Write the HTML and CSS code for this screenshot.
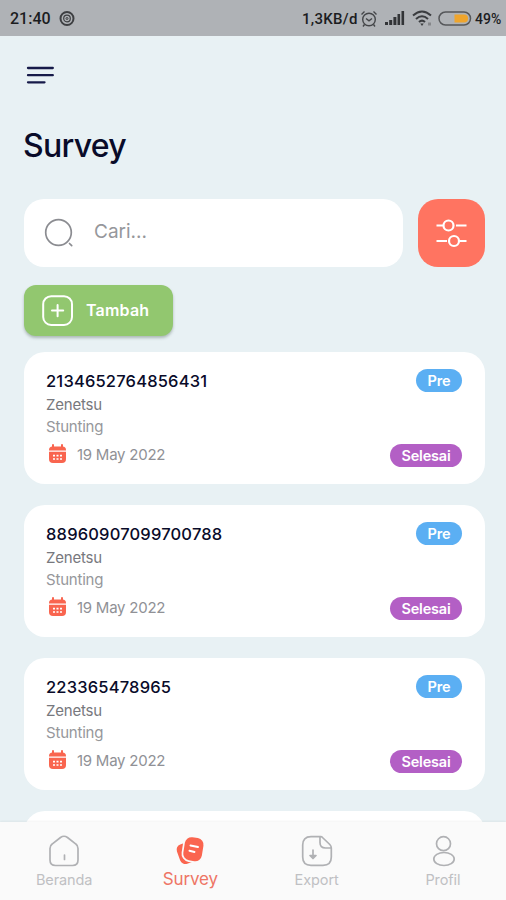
FILE: index.html
```html
<!DOCTYPE html>
<html lang="id">
<head>
<meta charset="utf-8">
<title>Survey</title>
<link rel="stylesheet" href="styles.css">
</head>
<body>
<svg class="defs" width="0" height="0">
  <symbol id="calendar" viewBox="0 0 18 20">
    <path d="M4.500 1v3M13.500 1v3" stroke="#f9654f" stroke-width="2" stroke-linecap="round"/>
    <path d="M.5 6.500V6A3.500 3.500 0 0 1 4 2.500h10A3.500 3.500 0 0 1 17.500 6v.500z" fill="#f9654f"/>
    <path d="M.5 7.700h17V15a4 4 0 0 1-4 4h-9a4 4 0 0 1-4-4z" fill="#f9654f"/>
    <path d="M4.500 11.700h2m1.500 0h2m1.500 0h2M4.500 15h2m1.500 0h2m1.500 0h2" stroke="#fff" stroke-width="1.700"/>
  </symbol>
</svg>
<header class="status">
  <span class="clock">21:40</span>
  <svg class="ring" width="16" height="16" viewBox="0 0 16 16" fill="none" stroke="#3d3f42"><circle cx="8" cy="7.500" r="6.500" stroke-width="2"/><circle cx="8" cy="7.500" r="3.300" stroke-width="1.200"/><circle cx="8" cy="7.500" r="1" stroke-width="1"/></svg>
  <span class="speed">1,3KB/d</span>
  <svg class="alarm" width="18" height="18" viewBox="0 0 18 18" fill="none" stroke="#444649" stroke-width="1.400"><circle cx="9" cy="9.500" r="6.300"/><path d="M1.500 4.500l3-3M16.500 4.500l-3-3M6 8.500l3 2.300 3-2.300M4.500 14.500L3 16.500M13.500 14.500l1.500 2"/></svg>
  <svg class="signal" width="20" height="15" viewBox="0 0 20 15" fill="#323437"><rect x="0" y="11" width="3" height="3"/><rect x="4.200" y="9" width="3" height="5"/><rect x="8.400" y="6" width="3" height="8"/><rect x="12.500" y="3" width="2.600" height="11"/><rect x="16.500" y="0" width="2.600" height="14"/></svg>
  <svg class="wifi" width="22" height="17" viewBox="0 0 22 17" fill="none" stroke="#3a3c3f" stroke-width="2"><path d="M1 5.500q9-8 18 0M4 9q6-5.500 12 0M7 12q3-2.800 6 0"/><path d="M8.300 13.500L10 16l1.700-2.500z" fill="#3a3c3f" stroke="none"/><path d="M16 14h3" stroke="#85878a" stroke-width="3"/></svg>
  <svg class="battery" width="34" height="16" viewBox="0 0 34 16"><rect x="1" y="1" width="31.500" height="13" rx="6.500" fill="none" stroke="#55575a" stroke-width="1.500"/><path d="M16.500 3.500H26a4 4 0 0 1 0 8h-9.500z" fill="#efa52d"/></svg>
  <span class="percent">49%</span>
</header>

<main class="page">
  <svg class="menu" width="28" height="20" viewBox="0 0 28 20" stroke="#161a49" stroke-width="2.300" stroke-linecap="round"><path d="M2 3h24.800M2 10.200h24.800M2 17.300h16.500"/></svg>
  <h1 class="title">Survey</h1>
  <div class="search-row">
    <div class="search">
      <svg width="32" height="32" viewBox="0 0 32 32" fill="none" stroke="#8b8c91" stroke-width="1.700" stroke-linecap="round"><circle cx="14.500" cy="15.500" r="12.800"/><path d="M25.500 26.500l2.200 2.200"/></svg>
      <span>Cari...</span>
    </div>
    <div class="filter">
      <svg width="32" height="32" viewBox="0 0 32 32" fill="none" stroke="#fff" stroke-width="2.200"><path d="M.5 8.500h7M20 8.500h10.500M.5 24H11M23.500 24h7"/><circle cx="12.500" cy="8.500" r="5"/><circle cx="18" cy="24" r="5"/></svg>
    </div>
  </div>
  <div class="add">
    <svg width="32" height="32" viewBox="0 0 32 32" fill="none" stroke="#fff" stroke-width="2" stroke-linecap="round"><rect x="1.200" y="1.200" width="28.800" height="28.800" rx="8"/><path d="M10 15.600h11.200M15.600 10v11.200"/></svg>
    <span>Tambah</span>
  </div>
  <section class="cards">
    <article class="card">
      <div class="info"><b class="number">2134652764856431</b><span class="name">Zenetsu</span><span class="topic">Stunting</span><span class="date"><svg width="19" height="20"><use href="#calendar"/></svg><span>19 May 2022</span></span></div>
      <div class="tags"><span class="tag pre">Pre</span><span class="tag done">Selesai</span></div>
    </article>
    <article class="card">
      <div class="info"><b class="number">88960907099700788</b><span class="name">Zenetsu</span><span class="topic">Stunting</span><span class="date"><svg width="19" height="20"><use href="#calendar"/></svg><span>19 May 2022</span></span></div>
      <div class="tags"><span class="tag pre">Pre</span><span class="tag done">Selesai</span></div>
    </article>
    <article class="card">
      <div class="info"><b class="number">223365478965</b><span class="name">Zenetsu</span><span class="topic">Stunting</span><span class="date"><svg width="19" height="20"><use href="#calendar"/></svg><span>19 May 2022</span></span></div>
      <div class="tags"><span class="tag pre">Pre</span><span class="tag done">Selesai</span></div>
    </article>
    <article class="card"></article>
  </section>
</main>

<nav class="nav">
  <div class="item">
    <svg width="32" height="32" viewBox="0 0 32 32" fill="none" stroke="#b0b1b4" stroke-width="1.700" stroke-linecap="round" stroke-linejoin="round"><path d="M2 13.500q0-3 2.400-4.700L12.500 2.500Q16 0 19.500 2.500l8.100 6.300Q30 10.500 30 13.500V25q0 5.500-5.500 5.500h-17Q2 30.500 2 25zM16.500 20v4.500"/></svg>
    <span>Beranda</span>
  </div>
  <div class="item active">
    <svg width="32" height="32" viewBox="0 0 32 32"><rect x="4" y="8" width="16" height="20.500" rx="5.500" fill="#fa654f" transform="rotate(-20 12 18)"/><rect x="9" y="1.800" width="20.500" height="25" rx="7.500" fill="#fa654f" stroke="#fafafa" stroke-width="1.700" transform="rotate(9 20 15)"/><path d="M16.500 10.500l7.500 1.600M15.500 15.800l5 1.100" stroke="#fff" stroke-width="2" stroke-linecap="round"/></svg>
    <span>Survey</span>
  </div>
  <div class="item">
    <svg width="32" height="32" viewBox="0 0 32 32" fill="none" stroke="#b0b1b4" stroke-width="1.700" stroke-linecap="round" stroke-linejoin="round"><path d="M20 1.700H10Q1.700 1.700 1.700 10v12q0 8.300 8.300 8.300h12q8.300 0 8.300-8.300V13q0-2-1.500-3.500L22 3q-1-1.300-2-1.300zM19 2v5.500q0 5.500 5.500 5.500h5.300"/><path d="M12 15v8m-3-2.500l3 3 3-3z" fill="#b0b1b4"/></svg>
    <span>Export</span>
  </div>
  <div class="item">
    <svg width="32" height="32" viewBox="0 0 32 32" fill="none" stroke="#b0b1b4" stroke-width="1.700"><circle cx="16.500" cy="8.700" r="7"/><ellipse cx="17" cy="24" rx="10.200" ry="6.500"/></svg>
    <span>Profil</span>
  </div>
</nav>
</body>
</html>
```

FILE: styles.css
```css
* { box-sizing: border-box; }
body {
  margin: 0;
  width: 506px;
  height: 900px;
  overflow: hidden;
  display: flex;
  flex-direction: column;
  background: #e8f1f4;
  color: #090b29;
  font-family: Inter, sans-serif;
}
svg { display: block; flex: none; }
.defs { display: none; }
.status {
  flex: none;
  height: 36px;
  padding: 1px 4px 0 10px;
  display: flex;
  align-items: center;
  background: #afb2b6;
  color: #1c1d1f;
  font: 500 15px/18px Roboto, sans-serif;
  white-space: nowrap;
}
.clock { width: 49px; font-size: 16px; }
.speed { margin-left: auto; width: 58px; letter-spacing: 0.3px; }
.alarm { margin-right: 7px; }
.signal { margin-right: 7px; }
.wifi { margin-right: 4px; }
.battery { margin-right: 3px; }
.percent { width: 27px; font-size: 14px; }
.page {
  flex: 1;
  min-height: 0;
  overflow: hidden;
  padding: 29px 21px 0 24px;
}
.menu { margin-left: 2px; }
.title {
  margin: 40px 0 32px -1px;
  font-weight: 500;
  font-size: 32px;
  line-height: 42px;
  letter-spacing: -0.7px;
}
.search-row { display: flex; gap: 15px; }
.search {
  flex: 1;
  height: 68px;
  padding-left: 20px;
  border-radius: 20px;
  display: flex;
  align-items: center;
  gap: 18px;
  background: #fff;
  color: #96979b;
  font-size: 19px;
}
.search span { margin-bottom: 4px; }
.filter {
  width: 67px;
  height: 68px;
  border-radius: 20px;
  display: grid;
  place-items: center;
  background: #ff7461;
}
.add {
  width: 149px;
  height: 51px;
  margin-top: 18px;
  padding-left: 18px;
  border-radius: 12px;
  display: flex;
  align-items: center;
  gap: 12px;
  background: #92c76f;
  box-shadow: 0 2px 3px rgba(60, 80, 70, 0.35);
  color: #fff;
  font-weight: 600;
  font-size: 16px;
  letter-spacing: 0.2px;
}
.add span { margin-bottom: 2px; }
.cards { margin-top: 16px; display: grid; gap: 21px; }
.card {
  height: 132px;
  padding: 17px 23px 17px 22px;
  border-radius: 21px;
  display: flex;
  justify-content: space-between;
  background: #fff;
}
.info { display: flex; flex-direction: column; white-space: nowrap; }
.number { font-weight: 500; font-size: 16.500px; line-height: 25px; letter-spacing: 0.18px; }
.name { font-size: 15px; line-height: 22px; letter-spacing: -0.2px; color: #77787d; }
.topic { font-size: 15px; line-height: 22px; letter-spacing: -0.2px; color: #96979b; }
.date {
  height: 34px;
  margin: 3px 0 0 2px;
  display: flex;
  align-items: center;
  gap: 10px;
  font-size: 15px;
  letter-spacing: -0.25px;
  color: #909196;
}
.date span { margin-top: 1px; }
.tags {
  display: flex;
  flex-direction: column;
  justify-content: space-between;
  align-items: flex-end;
}
.tag {
  height: 23px;
  border-radius: 12px;
  color: #fff;
  font-weight: 600;
  font-size: 14.500px;
  letter-spacing: -0.2px;
  line-height: 24px;
  text-align: center;
}
.pre { width: 46px; background: #5baff3; }
.done { width: 72px; background: #b35fc5; }
.nav {
  flex: none;
  height: 78px;
  padding-left: 1px;
  display: grid;
  grid-template-columns: repeat(4, 1fr);
  background: #fafafa;
  box-shadow: 0 -1px 2px rgba(0, 0, 0, 0.05);
}
.item {
  padding-top: 13px;
  display: flex;
  flex-direction: column;
  align-items: center;
  color: #bfc0c3;
  font-size: 14.500px;
  letter-spacing: -0.1px;
  line-height: 26px;
}
.active { color: #ee7565; font-size: 17px; line-height: 24px; }
```
